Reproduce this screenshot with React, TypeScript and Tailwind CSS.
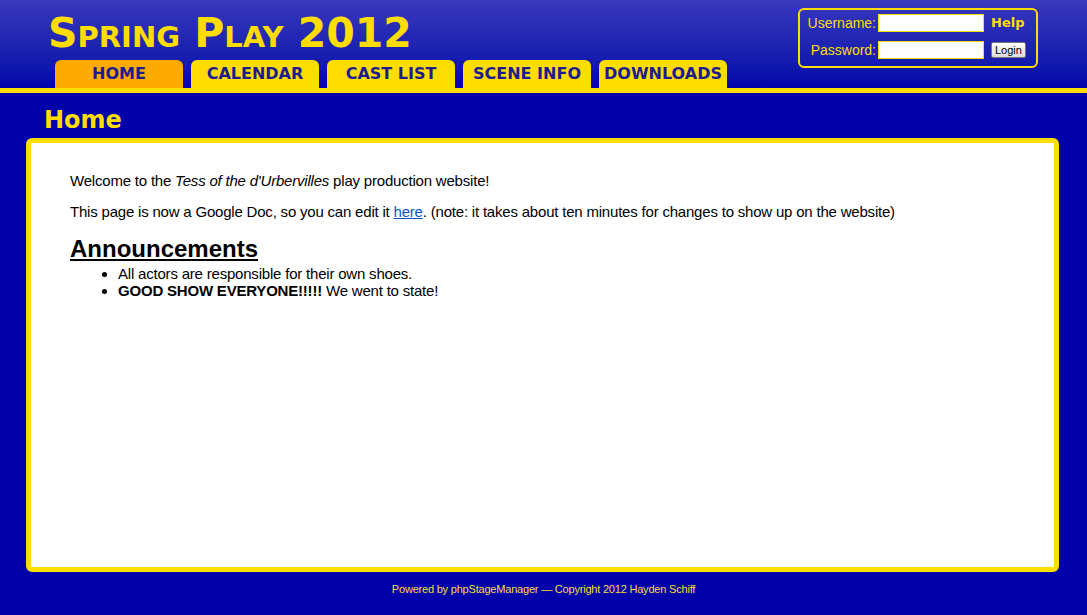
import React from 'react';

const tabs = ['HOME', 'CALENDAR', 'CAST LIST', 'SCENE INFO', 'DOWNLOADS'];

export default function App() {
  return (
    <div className="min-h-[615px] bg-[#0000aa] font-['Liberation_Sans',Arial,sans-serif]">
      {/* Header */}
      <div className="relative h-[88px] bg-gradient-to-b from-[#3838bc] to-[#0202a8]">
        <h1 className="absolute left-[48px] top-[7px] font-['DejaVu_Sans',Verdana,sans-serif] text-[41px] font-bold leading-[52px] text-[#ffdd00] [font-variant:small-caps]">
          Spring Play 2012
        </h1>
        <div className="absolute left-[55px] top-[60px] flex gap-[8px]">
          {tabs.map((t, i) => (
            <div
              key={t}
              className={`flex h-[28px] w-[128px] items-center justify-center rounded-t-[6px] font-['DejaVu_Sans',Verdana,sans-serif] text-[16px] font-bold text-[#1c1c8e] ${
                i === 0 ? 'bg-[#ffaa00]' : 'bg-[#ffdd00]'
              }`}
            >
              {t}
            </div>
          ))}
        </div>

        {/* Login box */}
        <div className="absolute left-[798px] top-[8px] h-[60px] w-[240px] rounded-[6px] border-2 border-[#ffdd00] text-[14px] leading-[18px] text-[#ffdd00]">
          <div className="mt-[4px] flex items-center">
            <span className="w-[76px] text-right">Username:</span>
            <input className="ml-[2px] h-[18px] w-[106px] border border-[#ffdd00] bg-white" />
            <span className="ml-[7px] font-['DejaVu_Sans',Verdana,sans-serif] text-[13px] font-bold">Help</span>
          </div>
          <div className="mt-[9px] flex items-center">
            <span className="w-[76px] text-right">Password:</span>
            <input type="password" className="ml-[2px] h-[18px] w-[106px] border border-[#ffdd00] bg-white" />
            <button className="ml-[7px] h-[16px] rounded-[2px] border border-[#777] bg-gradient-to-b from-white to-[#ddd] px-[3px] text-[11px] leading-[14px] text-black">
              Login
            </button>
          </div>
        </div>
      </div>
      <div className="h-[5px] bg-[#ffdd00]" />

      {/* Page title */}
      <h2 className="ml-[44px] mt-[13px] font-['DejaVu_Sans',Verdana,sans-serif] text-[24px] font-bold leading-[28px] text-[#ffdd00]">
        Home
      </h2>

      {/* Content */}
      <div className="ml-[26px] mr-[28px] mt-[4px] h-[434px] rounded-[6px] border-[5px] border-[#ffdd00] bg-white px-[39px] pt-[29px] text-[15px] leading-[18px] tracking-[-0.2px] text-black">
        <p>
          Welcome to the <i>Tess of the d'Urbervilles</i> play production website!
        </p>
        <p className="mt-[13px]">
          This page is now a Google Doc, so you can edit it{' '}
          <a href="#" className="text-[#1155cc] underline">here</a>. (note: it takes about ten minutes for changes to show up on the website)
        </p>
        <h3 className="mt-[14px] text-[24px] font-bold leading-[28px] tracking-normal underline">Announcements</h3>
        <ul className="mt-[2px] list-disc pl-[48px] leading-[17px]">
          <li>All actors are responsible for their own shoes.</li>
          <li>
            <b>GOOD SHOW EVERYONE!!!!!</b> We went to state!
          </li>
        </ul>
      </div>

      {/* Footer */}
      <div className="pt-[9px] pb-[20px] text-center text-[11px] tracking-[-0.2px] text-[#ffdd33]">
        Powered by phpStageManager — Copyright 2012 Hayden Schiff
      </div>
    </div>
  );
}
